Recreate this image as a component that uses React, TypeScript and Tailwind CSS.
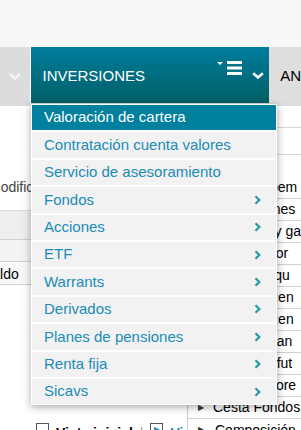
import React from "react";

const items = [
  { label: "Valoración de cartera", sub: false, active: true },
  { label: "Contratación cuenta valores", sub: false },
  { label: "Servicio de asesoramiento", sub: false },
  { label: "Fondos", sub: true },
  { label: "Acciones", sub: true },
  { label: "ETF", sub: true },
  { label: "Warrants", sub: true },
  { label: "Derivados", sub: true },
  { label: "Planes de pensiones", sub: true },
  { label: "Renta fija", sub: true },
  { label: "Sicavs", sub: true },
];

const rightRows = [
  { t: "pem", pl: "pl-[82px]" },
  { t: "ones", pl: "pl-[77px]" },
  { t: "· y ga", pl: "pl-[78px]" },
  { t: "por", pl: "pl-[80px]" },
  { t: "liqu", pl: "pl-[80px]" },
  { t: "Ren", pl: "pl-[80px]" },
  { t: "Ren", pl: "pl-[80px]" },
  { t: "gan", pl: "pl-[81px]" },
  { t: "n fut", pl: "pl-[77px]" },
  { t: "alore", pl: "pl-[77px]" },
];

function Chevron() {
  return (
    <svg width="7" height="10" viewBox="0 0 7 10" className="shrink-0">
      <path d="M1.5 1.2 L5.3 5 L1.5 8.8" fill="none" stroke="#2a9aa3" strokeWidth="2.3" />
    </svg>
  );
}

function DownChevron({ color }: { color: string }) {
  return (
    <svg width="12" height="7" viewBox="0 0 12 7">
      <path d="M1.2 1.2 L6 5.4 L10.8 1.2" fill="none" stroke={color} strokeWidth="2.6" />
    </svg>
  );
}

export default function App() {
  return (
    <div
      className="relative w-[301px] h-[430px] overflow-hidden bg-white"
      style={{ fontFamily: '"Liberation Sans", Arial, sans-serif' }}
    >
      {/* top band */}
      <div className="h-[47px] bg-[#f7f7f7]" />

      {/* nav */}
      <div className="flex h-[56px]">
        <div className="w-[30px] bg-[#dcdcdc] flex items-center pl-[9px] pt-[3px]">
          <DownChevron color="#f4f4f4" />
        </div>
        <div className="w-px bg-white" />
        <div className="w-[244px] bg-gradient-to-b from-[#007d9c] to-[#005f67] flex items-center pl-[12px] relative">
          <span className="text-white text-[15px] pt-[2px]">INVERSIONES</span>
          <div className="absolute left-[186px] top-[13px] flex items-start">
            <svg width="26" height="17" viewBox="0 0 26 17">
              <path d="M0 2 L6 2 L3 5 Z" fill="white" />
              <rect x="10" y="1" width="15" height="3" fill="white" />
              <rect x="10" y="6.5" width="15" height="3" fill="white" />
              <rect x="10" y="12" width="15" height="3" fill="white" />
            </svg>
          </div>
          <div className="absolute left-[221px] top-[25px]">
            <DownChevron color="white" />
          </div>
        </div>
        <div className="flex-1 bg-[#dedede] flex items-center pl-[11px] pt-[2px]">
          <span className="text-black text-[15px]">AN</span>
        </div>
      </div>
      <div className="h-[3px] bg-[#dcdcdc]" />

      {/* page content behind the menu */}
      <div className="flex">
        <div className="w-[198px] flex flex-col">
          <div className="h-[72px]" />
          <div className="h-[18px] flex items-center text-[14px] text-[#444] -ml-[11px] whitespace-nowrap">
            modificar
          </div>
          <div className="h-[14px]" />
          <div className="h-[30px] bg-[#eeeeee] border-t border-[#dddddd] border-b border-b-[#cfcfcf]" />
          <div className="h-[22px] bg-[#f3f3f3] border-b border-[#d0d0d0]" />
          <div className="h-[23px] bg-[#f8f8f8] border-b border-[#d0d0d0] flex items-center pt-[2px] text-[14px] text-black -ml-[17px]">
            Saldo
          </div>
          <div className="h-[137px]" />
          <div className="flex items-start pl-[36px] gap-[7px] text-[14px]">
            <div className="w-[13px] h-[13px] border border-[#555] bg-white mt-[1px]" />
            <span className="font-bold text-black leading-[16px] pt-[3px]">Vista inicial</span>
            <span className="text-[#999] leading-[16px] pt-[3px]">|</span>
            <div className="w-[13px] h-[13px] border border-[#555] bg-white mt-[1px] flex items-center justify-center">
              <span className="text-[8px] text-[#1a8cb7] leading-none">▶</span>
            </div>
            <span className="font-bold text-[#1a8cb7] leading-[16px] pt-[3px]">Vi</span>
          </div>
        </div>
        <div className="flex-1 border-l border-[#cccccc] flex flex-col text-[14px] text-black">
          <div className="h-[22px] border-b border-[#d6d6d6]" />
          <div className="h-[27px] border-b border-[#d6d6d6]" />
          <div className="h-[22px]" />
          {rightRows.map((r, i) => (
            <div
              key={i}
              className={`h-[22px] border-b border-[#d0d0d0] flex items-center whitespace-nowrap ${r.pl}`}
            >
              {r.t}
            </div>
          ))}
          <div className="h-[22px] border-b border-[#d0d0d0] flex items-center pl-[10px] gap-[9px] whitespace-nowrap">
            <span className="text-[8px] text-[#333]">▶</span>
            <span>Cesta Fondos</span>
          </div>
          <div className="h-[22px] flex items-center pl-[10px] gap-[11px] whitespace-nowrap">
            <span className="text-[8px] text-[#333]">▶</span>
            <span>Composición</span>
          </div>
        </div>
      </div>

      {/* dropdown menu */}
      <div className="absolute left-[31px] top-[104px] w-[246px] bg-white p-px shadow-[0_2px_8px_rgba(0,0,0,0.35)] flex flex-col gap-[2px]">
        {items.map((it) => (
          <div
            key={it.label}
            className={`h-[25.4px] flex items-center justify-between pl-[12px] pr-[15px] text-[15px] whitespace-nowrap ${
              it.active ? "bg-[#00809f] text-white" : "bg-[#f2f2f2] text-[#1a8cb7]"
            }`}
          >
            <span>{it.label}</span>
            {it.sub && <Chevron />}
          </div>
        ))}
      </div>
    </div>
  );
}
